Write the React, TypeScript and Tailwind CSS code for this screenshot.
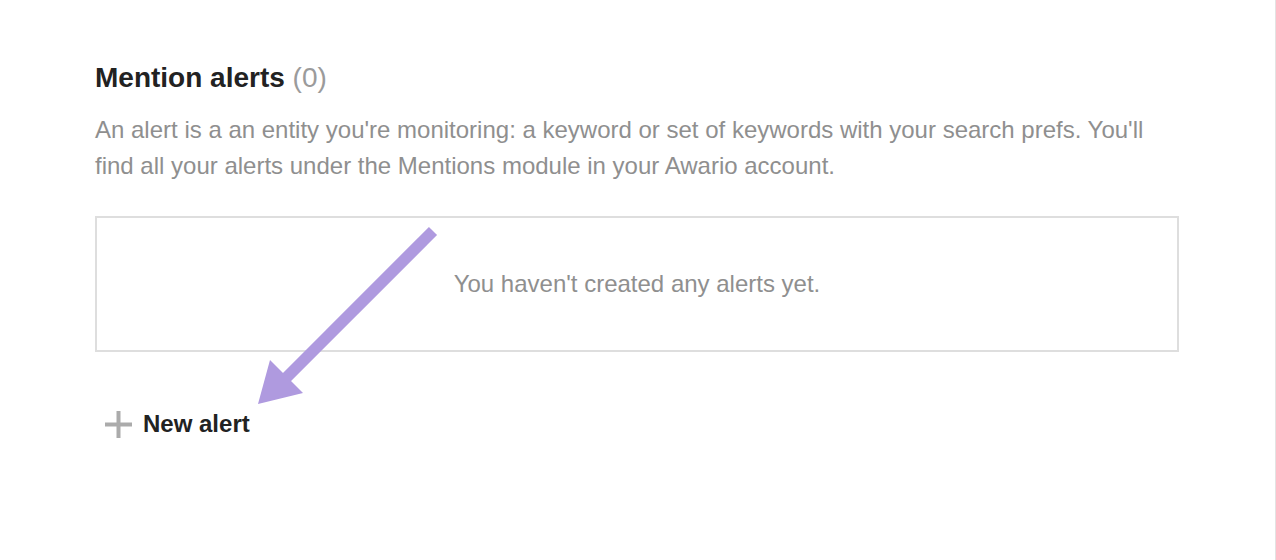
import React from "react";

const PurpleArrow = () => (
  <svg
    className="absolute left-0 top-0 pointer-events-none"
    width="1276"
    height="560"
    viewBox="0 0 1276 560"
  >
    <line
      x1="433"
      y1="231"
      x2="282"
      y2="382"
      stroke="#af9adf"
      strokeWidth="11.5"
      strokeLinecap="butt"
    />
    <polygon points="258,404 270,360 303,393" fill="#af9adf" />
  </svg>
);

const PlusIcon = () => (
  <svg width="27" height="27" viewBox="0 0 27 27">
    <rect x="0" y="11.5" width="27" height="4" fill="#ababab" />
    <rect x="11.5" y="0" width="4" height="27" fill="#ababab" />
  </svg>
);

export default function App() {
  return (
    <div className="relative w-[1276px] h-[560px] bg-white border-r border-[#e3e3e3] font-['Liberation_Sans',Arial,sans-serif] overflow-hidden">
      <div className="w-[1084px] ml-[95px] pt-[60px]">
        <h1 className="text-[28px] leading-[36px] font-bold text-[#222]">
          Mention alerts{" "}
          <span className="font-normal text-[#9b9b9b]">(0)</span>
        </h1>
        <p className="mt-[16px] text-[24px] leading-[36px] text-[#8f8f8f]">
          An alert is a an entity you're monitoring: a keyword or set of keywords
          with your search prefs. You'll find all your alerts under the Mentions
          module in your Awario account.
        </p>
        <div className="mt-[32px] h-[136px] border-2 border-[#dedede] flex items-center justify-center">
          <span className="text-[24px] leading-[36px] text-[#8f8f8f]">
            You haven't created any alerts yet.
          </span>
        </div>
        <button className="mt-[57px] ml-[10px] flex items-center gap-[11px] cursor-pointer">
          <PlusIcon />
          <span className="text-[24px] leading-[30px] font-bold text-[#222]">
            New alert
          </span>
        </button>
      </div>
      <PurpleArrow />
    </div>
  );
}
